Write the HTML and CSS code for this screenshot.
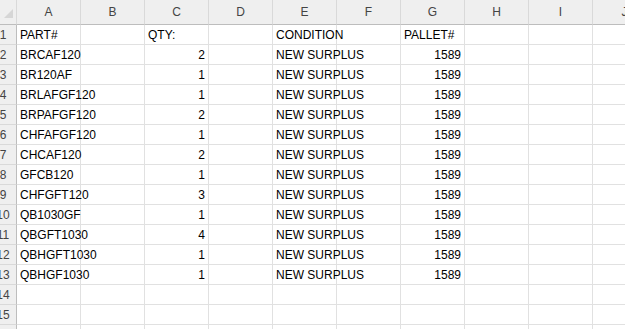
FILE: index.html
```html
<!DOCTYPE html>
<html lang="en">
<head>
    <meta charset="UTF-8">
    <title>Sheet1</title>
    <link rel="stylesheet" href="styles.css">
</head>
<body>

    <table class="sheet">
        <colgroup>
            <col class="col-head">
            <col><col><col><col><col><col><col><col><col><col>
        </colgroup>
        <thead>
            <tr>
                <th class="corner">
                    <svg width="16" height="23" viewBox="0 0 16 23"><polygon points="13,8 13,17 4,17" fill="#d6d6d6"/></svg>
                </th>
                <th>A</th><th>B</th><th>C</th><th>D</th><th>E</th>
                <th>F</th><th>G</th><th>H</th><th>I</th><th>J</th>
            </tr>
        </thead>
        <tbody>
            <tr>
                <th class="row"><span>1</span></th>
                <td>PART#</td><td></td><td>QTY:</td><td></td><td>CONDITION</td><td></td><td>PALLET#</td><td></td><td></td><td></td>
            </tr>
            <tr>
                <th class="row"><span>2</span></th>
                <td>BRCAF120</td><td></td><td class="num">2</td><td></td><td>NEW SURPLUS</td><td></td><td class="num">1589</td><td></td><td></td><td></td>
            </tr>
            <tr>
                <th class="row"><span>3</span></th>
                <td>BR120AF</td><td></td><td class="num">1</td><td></td><td>NEW SURPLUS</td><td></td><td class="num">1589</td><td></td><td></td><td></td>
            </tr>
            <tr>
                <th class="row"><span>4</span></th>
                <td>BRLAFGF120</td><td></td><td class="num">1</td><td></td><td>NEW SURPLUS</td><td></td><td class="num">1589</td><td></td><td></td><td></td>
            </tr>
            <tr>
                <th class="row"><span>5</span></th>
                <td>BRPAFGF120</td><td></td><td class="num">2</td><td></td><td>NEW SURPLUS</td><td></td><td class="num">1589</td><td></td><td></td><td></td>
            </tr>
            <tr>
                <th class="row"><span>6</span></th>
                <td>CHFAFGF120</td><td></td><td class="num">1</td><td></td><td>NEW SURPLUS</td><td></td><td class="num">1589</td><td></td><td></td><td></td>
            </tr>
            <tr>
                <th class="row"><span>7</span></th>
                <td>CHCAF120</td><td></td><td class="num">2</td><td></td><td>NEW SURPLUS</td><td></td><td class="num">1589</td><td></td><td></td><td></td>
            </tr>
            <tr>
                <th class="row"><span>8</span></th>
                <td>GFCB120</td><td></td><td class="num">1</td><td></td><td>NEW SURPLUS</td><td></td><td class="num">1589</td><td></td><td></td><td></td>
            </tr>
            <tr>
                <th class="row"><span>9</span></th>
                <td>CHFGFT120</td><td></td><td class="num">3</td><td></td><td>NEW SURPLUS</td><td></td><td class="num">1589</td><td></td><td></td><td></td>
            </tr>
            <tr>
                <th class="row"><span>10</span></th>
                <td>QB1030GF</td><td></td><td class="num">1</td><td></td><td>NEW SURPLUS</td><td></td><td class="num">1589</td><td></td><td></td><td></td>
            </tr>
            <tr>
                <th class="row"><span>11</span></th>
                <td>QBGFT1030</td><td></td><td class="num">4</td><td></td><td>NEW SURPLUS</td><td></td><td class="num">1589</td><td></td><td></td><td></td>
            </tr>
            <tr>
                <th class="row"><span>12</span></th>
                <td>QBHGFT1030</td><td></td><td class="num">1</td><td></td><td>NEW SURPLUS</td><td></td><td class="num">1589</td><td></td><td></td><td></td>
            </tr>
            <tr>
                <th class="row"><span>13</span></th>
                <td>QBHGF1030</td><td></td><td class="num">1</td><td></td><td>NEW SURPLUS</td><td></td><td class="num">1589</td><td></td><td></td><td></td>
            </tr>
            <tr>
                <th class="row"><span>14</span></th>
                <td></td><td></td><td></td><td></td><td></td><td></td><td></td><td></td><td></td><td></td>
            </tr>
            <tr>
                <th class="row"><span>15</span></th>
                <td></td><td></td><td></td><td></td><td></td><td></td><td></td><td></td><td></td><td></td>
            </tr>
            <tr>
                <th class="row"><span>16</span></th>
                <td></td><td></td><td></td><td></td><td></td><td></td><td></td><td></td><td></td><td></td>
            </tr>
        </tbody>
    </table>

</body>
</html>
```

FILE: styles.css
```css
* {
    margin: 0;
    padding: 0;
    box-sizing: border-box;
}

body {
    font-family: 'Liberation Sans', Arial, sans-serif;
    font-size: 12px;
    background: #ffffff;
    color: #000000;
    overflow: hidden;
    width: 625px;
    height: 329px;
}

.sheet {
    border-collapse: separate;
    border-spacing: 0;
    table-layout: fixed;
    width: 657px;
}

.sheet col {
    width: 64px;
}

.sheet col.col-head {
    width: 17px;
}

/* Kepala kolom (A, B, C ...) */
.sheet thead th {
    height: 24px;
    background: #efefef;
    color: #444444;
    font-weight: normal;
    text-align: center;
    line-height: 23px;
    padding-top: 1px;
    border-right: 1px solid #d9d9d9;
    border-bottom: 1px solid #bdbdbd;
}

.sheet thead th.corner {
    padding: 0;
    line-height: 0;
    border-right: 1px solid #d9d9d9;
}

.corner svg {
    display: block;
}

/* Nomor baris */
.sheet th.row {
    height: 20px;
    background: #efefef;
    color: #444444;
    font-weight: normal;
    overflow: hidden;
    border-right: 1px solid #bdbdbd;
    border-bottom: 1px solid #d9d9d9;
    padding-top: 2px;
    line-height: 17px;
    position: relative;
}

.sheet th.row span {
    display: block;
    width: 26px;
    margin-left: -10px;
    text-align: center;
}

/* Sel biasa */
.sheet td {
    height: 20px;
    padding: 2px 3px 0 3px;
    line-height: 17px;
    white-space: nowrap;
    overflow: visible;
    border-right: 1px solid #e1e1e1;
    border-bottom: 1px solid #e1e1e1;
}

.sheet td.num {
    text-align: right;
}
```
